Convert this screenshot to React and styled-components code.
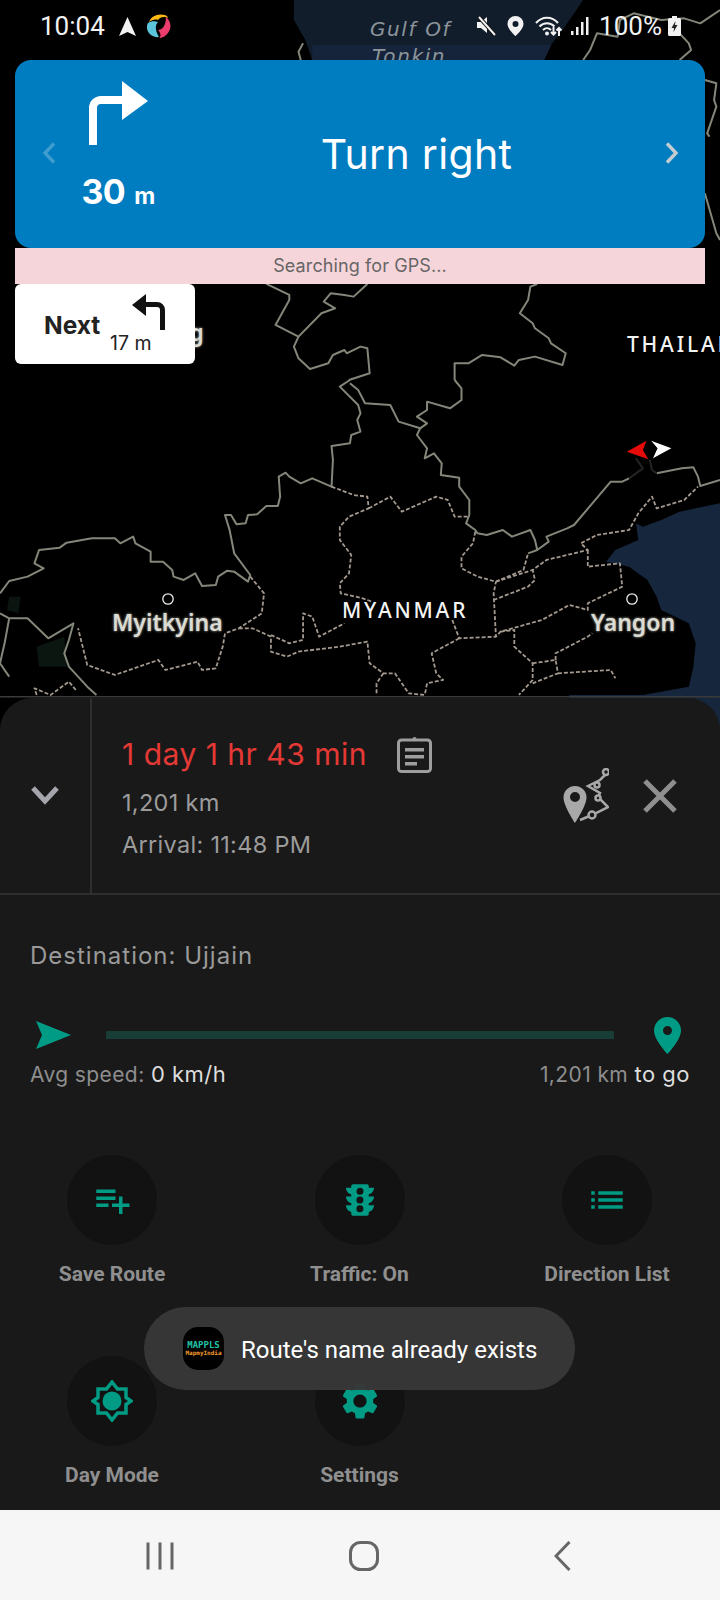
import React from 'react';
import styled, { createGlobalStyle } from 'styled-components';
import { MdPlaylistAdd, MdTraffic, MdList, MdSettings } from 'react-icons/md';

const GlobalStyle = createGlobalStyle`
  html, body { margin: 0; padding: 0; background: #000; }
  * { box-sizing: border-box; }
`;

const Screen = styled.div`
  position: relative;
  width: 720px;
  height: 1600px;
  overflow: hidden;
  display: flex;
  flex-direction: column;
  background: #000;
  font-family: Inter, "Liberation Sans", sans-serif;
`;

const MapArea = styled.div`
  position: relative;
  flex: 0 0 730px;
  overflow: hidden;
`;

const MapDrawing = styled.svg`
  position: absolute;
  inset: 0;
  width: 720px;
  height: 730px;
`;

const Border = styled.polyline`
  fill: none;
  stroke: #82877a;
  stroke-width: 2;
  stroke-linejoin: round;
  vector-effect: non-scaling-stroke;
`;

const DashedBorder = styled(Border)`
  stroke: #a3998f;
  stroke-width: 1.8;
  stroke-dasharray: 4 2;
`;

const RouteLine = styled(Border)`
  stroke: #232323;
`;

const MapLabel = styled.span`
  position: absolute;
  left: ${p => p.$x}px;
  top: ${p => p.$y}px;
  white-space: nowrap;
  font-family: "Noto Sans", "Open Sans", sans-serif;
`;

const SeaLabel = styled(MapLabel)`
  font-family: "DejaVu Sans", sans-serif;
  font-style: italic;
  font-size: 20px;
  letter-spacing: 1.6px;
  color: #8c959b;
`;

const CountryLabel = styled(MapLabel)`
  font-size: 21px;
  font-weight: 500;
  letter-spacing: 2.8px;
  color: #f4f4f4;
`;

const CityLabel = styled(MapLabel)`
  font-size: 23px;
  font-weight: 600;
  color: #dcdcd4;
  text-shadow: 0 0 3px #77776f, 0 0 2px #77776f;
`;

const StatusBar = styled.div`
  position: relative;
  height: 60px;
  padding: 14px 39px 0 40px;
  display: flex;
  align-items: flex-start;
  justify-content: space-between;
  font-family: Roboto, sans-serif;
  color: #f2f2f2;
`;

const StatusGroup = styled.div`
  display: flex;
  align-items: center;
  height: 24px;
  gap: ${p => p.$gap ?? 10}px;
`;

const StatusText = styled.span`
  font-size: 26px;
  line-height: 24px;
`;

const Banner = styled.div`
  position: relative;
  height: 188px;
  margin: 0 15px;
  padding: 0 26px 0 27px;
  display: flex;
  align-items: center;
  background: #007cc0;
  border-radius: 16px;
  color: #fff;
`;

const ManeuverColumn = styled.div`
  width: 124px;
  padding-bottom: 14px;
  display: flex;
  flex-direction: column;
  align-items: center;
  gap: 30px;
`;

const Distance = styled.div`
  font-weight: 700;
  font-size: 34px;
  line-height: 34px;
  white-space: nowrap;
  letter-spacing: -0.6px;

  small {
    font-size: 23px;
    margin-left: 9px;
  }
`;

const BannerTitle = styled.div`
  flex: 1;
  text-align: center;
  font-size: 41px;
  letter-spacing: 0.3px;
  line-height: 46px;
  padding-right: 12px;
`;

const PagerIcon = styled.svg`
  flex: none;
  width: 14px;
  height: 22px;
  margin-bottom: 2px;
  fill: none;
  stroke: ${p => p.$color};
  stroke-width: 3.4;
`;

const GpsBar = styled.div`
  position: relative;
  height: 36px;
  margin: 0 15px;
  background: #f6d5da;
  color: #666;
  font-size: 18px;
  letter-spacing: 0.1px;
  line-height: 36px;
  text-align: center;
`;

const NextCard = styled.div`
  position: relative;
  width: 180px;
  height: 80px;
  margin-left: 15px;
  padding: 10px 30px 0 29px;
  display: flex;
  justify-content: space-between;
  background: #fff;
  border-radius: 6px;
  color: #222;
`;

const NextLabel = styled.div`
  padding-top: 17px;
  font-size: 24.5px;
  line-height: 28px;
  font-weight: 700;
`;

const NextTurn = styled.div`
  width: 55px;
  font-size: 19.5px;
  line-height: 20px;
  white-space: nowrap;

  svg {
    display: block;
    margin: 0 0 3px 22px;
  }
`;

const Panel = styled.div`
  position: relative;
  flex: none;
  height: 812px;
  margin-top: -32px;
  background: #191919;
  border-radius: 32px 32px 0 0;
`;

const Summary = styled.div`
  height: 197px;
  display: flex;
  border-bottom: 2px solid #2e2e2e;
`;

const CollapseCell = styled.div`
  width: 92px;
  padding-bottom: 2px;
  display: flex;
  align-items: center;
  justify-content: center;
  border-right: 2px solid #2e2e2e;
`;

const Trip = styled.div`
  flex: 1;
  padding: 37px 0 0 30px;
`;

const TripTitle = styled.div`
  display: flex;
  align-items: center;
  gap: 30px;
  height: 38px;
  color: #e53935;
  font-size: 30px;
  letter-spacing: 0.5px;
`;

const TripLine = styled.div`
  margin-top: ${p => p.$top}px;
  color: #9c9c9c;
  font-size: 23.5px;
  letter-spacing: 0.3px;
  line-height: 28px;
`;

const TripActions = styled.div`
  display: flex;
  align-items: center;
  gap: 34px;
  padding: 0 43px 0 0;
`;

const Details = styled.div`
  padding: 44px 30px 0 30px;
`;

const Destination = styled.div`
  color: #9a9a9a;
  font-size: 24px;
  letter-spacing: 1px;
  line-height: 34px;
`;

const ProgressRow = styled.div`
  margin-top: 43px;
  height: 38px;
  display: flex;
  align-items: center;
  padding: 0 9px 0 6px;
`;

const ProgressBar = styled.div`
  flex: 1;
  height: 8px;
  margin: 0 40px 0 35px;
  background: #173d36;
`;

const Stats = styled.div`
  margin-top: 6px;
  display: flex;
  justify-content: space-between;
  color: #8e8e8e;
  font-size: 21px;
  letter-spacing: 0.4px;
  line-height: 28px;

  b {
    font-weight: 400;
    font-size: 22px;
    letter-spacing: 0.5px;
    color: #dedede;
  }
`;

const ActionGrid = styled.div`
  margin: 66px 0 0 17px;
  display: grid;
  grid-template-columns: repeat(3, 190px);
  column-gap: 57.5px;
  row-gap: 67px;
`;

const Action = styled.div`
  display: flex;
  flex-direction: column;
  align-items: center;
`;

const ActionCircle = styled.div`
  width: 90px;
  height: 90px;
  border-radius: 50%;
  background: #121212;
  color: #009b84;
  display: flex;
  align-items: center;
  justify-content: center;
`;

const ActionLabel = styled.div`
  margin-top: 14px;
  color: #8f8f8f;
  font-family: Roboto, sans-serif;
  font-weight: 700;
  font-size: 21px;
  line-height: 30px;
`;

const Toast = styled.div`
  position: absolute;
  left: 144px;
  top: 1307px;
  width: 431px;
  height: 83px;
  padding-left: 39px;
  display: flex;
  align-items: center;
  gap: 17px;
  border-radius: 42px;
  background: rgba(56, 56, 56, 0.97);
  color: #fff;
  font-family: Roboto, sans-serif;
  font-size: 24px;
`;

const ToastText = styled.span`
  padding-top: 3px;
`;

const ToastIcon = styled.div`
  width: 41px;
  height: 43px;
  border-radius: 15px;
  background: #000;
  display: flex;
  flex-direction: column;
  align-items: center;
  justify-content: center;
  font-family: "DejaVu Sans Mono", monospace;
  line-height: 8px;
`;

const ToastBrand = styled.span`
  color: ${p => p.$color};
  font-size: ${p => p.$size}px;
  font-weight: 700;
`;

const NavBar = styled.div`
  flex: 1;
  background: #f6f6f6;
  display: flex;
  align-items: flex-start;
  padding: 31px 149px 0 146px;
  justify-content: space-between;
`;

const NavIcon = styled.svg`
  fill: none;
  stroke: #666;
  stroke-width: 3;
`;

const SOLID = [
  '762,0 740,20 780,75 785,100 778,120 785,155 765,165 762,190 722,198 725,240 722,320 680,295 655,310 630,290 622,278 607,290 610,350 605,378 580,378 560,403 540,405 535,430 515,433 503,405 490,405 500,450 510,520 545,585 540,605 510,575 495,572 475,590 470,615 440,618 425,580 400,600 378,590 375,570 355,545 328,545 328,515 295,490 290,470 262,490 250,475 200,475 145,488 130,503 85,510 75,550 95,565 60,590 20,603 0,640',
  '990,0 1005,25 1005,60 980,85 930,65 930,90 908,110 930,130 915,145 868,125 850,75 795,70 780,30 762,10',
  '915,145 908,165 930,205 925,235 945,220 962,250 960,285 1000,293 1000,320 1022,360 1022,405 1015,430 1035,450 1040,460 1060,465 1095,450 1115,470 1155,450 1165,480 1170,510 1195,485 1190,470 1235,445 1250,435 1330,305 1355,305 1370,295',
  '1170,510 1150,520',
  '1430,280 1485,265 1510,262 1520,290 1525,318 1568,300',
  '0,700 20,715 60,715 105,775 160,730 150,780 140,820 150,860 190,920 210,945',
  '20,715 10,790 0,850 20,890',
];

const DASHED = [
  '722,320 770,345 800,350 803,385 760,410 740,440 740,480 765,525 760,580 740,610 742,640 790,655 810,665',
  '803,385 850,350 875,395 950,350 975,360 990,410 1022,410',
  '1035,455 1030,490 1005,530 1005,565 1040,590 1080,605 1140,570 1150,520',
  '1080,605 1160,570 1190,540 1280,510 1265,490 1300,465 1370,450 1390,400 1420,350 1430,385 1490,360 1520,320',
  '1280,510 1280,560 1350,550 1355,620 1280,670 1280,690 1240,675 1180,720 1090,755 1080,770 1075,640 1080,605',
  '1075,660 1150,620 1165,600 1160,570',
  '1090,755 1120,750 1120,800 1160,850 1160,900 1130,945',
  '985,720 1000,775 1080,770',
  '1000,775 940,820 950,880 965,900 930,910 925,945',
  '520,745 550,745 590,770 590,815 625,830 650,815 740,800 800,785 805,850 835,880 860,880 890,940 925,945',
  '590,765 630,790 660,780 660,700 680,710 695,770 750,730',
  '545,590 575,640 570,700 520,745 490,760 485,800 470,865 440,870 430,845 360,870 345,840 250,885 190,855 170,745',
  '1160,850 1210,840 1215,880 1160,910',
  '1210,840 1210,820 1280,770 1290,760',
  '1215,880 1330,870 1340,895',
  '80,945 75,925 110,945 150,905 165,930',
  '835,880 820,910 820,945',
];

const TOP_SOLID = [
  '1568,30 1525,70 1490,55 1440,60 1380,40 1350,60 1345,110 1300,100 1285,150 1270,180',
  '1460,70 1500,130 1505,150 1480,180',
  '655,180 650,155 660,130',
  '1535,240 1560,250 1555,300 1560,320 1540,400 1545,410',
  '1535,580 1560,700 1568,720',
  '580,852 630,885 630,900 600,975 650,1010 640,1040 650,1075 675,1107 715,1090 725,1065 750,1050 755,1060 785,1040 800,1045 805,1120 760,1140',
  '650,1010 700,940 730,925 705,905 720,880 750,885 770,890 800,852',
  '1170,852 1155,860 1150,900 1132,940 1160,970 1165,985 1195,1015 1200,1030 1232,1060 1225,1095 1165,1070 1130,1080 1120,1097 1090,1072 1050,1065 1020,1090 990,1090 990,1140',
];

const MapBackground = () => (
  <MapDrawing viewBox="0 0 720 730">
    <g transform="scale(0.4592 0.3333)">
      <polygon points="640,0 1270,0 1230,80 1200,135 1185,180 680,180 665,120 640,60" fill="#121d2c" />
      <polygon points="680,135 1200,135 1185,180 680,180" fill="#15243a" />
      {TOP_SOLID.map(p => <Border key={p} points={p} />)}
    </g>
    <g transform="translate(0 380) scale(0.4592 0.3333)">
      <polygon
        points="1568,370 1480,395 1440,420 1400,440 1385,430 1390,480 1340,510 1320,545 1370,560 1410,600 1430,650 1440,690 1500,730 1515,790 1510,860 1500,920 1400,945 1240,945 1240,1050 1568,1050"
        fill="#16263d"
      />
      <polygon points="20,650 45,650 40,700 15,690" fill="#0b140f" />
      <polygon points="80,800 140,770 145,860 85,860" fill="#0c1611" />
      {SOLID.map(p => <Border key={p} points={p} />)}
      {DASHED.map(p => <DashedBorder key={p} points={p} />)}
      <RouteLine points="1370,295 1400,265 1385,235" />
      <RouteLine points="1415,240 1420,270 1430,280" />
      <polygon points="1365,215 1408,182 1400,210 1412,238" fill="#e50b0b" />
      <polygon points="1418,182 1462,205 1422,235 1432,205" fill="#fff" />
    </g>
    <circle cx="168" cy="599" r="5.2" fill="#000" stroke="#eee" strokeWidth="1.3" />
    <circle cx="632" cy="599" r="5.2" fill="#000" stroke="#eee" strokeWidth="1.3" />
    <rect x="0" y="696" width="720" height="1.5" fill="#3a3a3a" />
  </MapDrawing>
);

const App = () => (
  <Screen>
    <GlobalStyle />
    <MapArea>
      <MapBackground />
      <SeaLabel $x={370} $y={17}>Gulf Of</SeaLabel>
      <SeaLabel $x={372} $y={44}>Tonkin</SeaLabel>
      <CityLabel $x={103} $y={316}>Jinghong</CityLabel>
      <CountryLabel $x={627} $y={330}>THAILAND</CountryLabel>
      <CountryLabel $x={342} $y={596}>MYANMAR</CountryLabel>
      <CityLabel $x={112} $y={606}>Myitkyina</CityLabel>
      <CityLabel $x={591} $y={606}>Yangon</CityLabel>

      <StatusBar>
        <StatusGroup $gap={14}>
          <StatusText>10:04</StatusText>
          <svg width="17" height="19" viewBox="0 0 17 19"><path d="M8.5 0L17 19 8.5 15 0 19z" fill="#f2f2f2" /></svg>
          <svg width="26" height="26" viewBox="0 0 26 26" style={{ marginLeft: -4 }}>
            <path d="M3 9C5 3 12 0 19 2c2 1 3 2 3 3-4-2-8-1-10 2-3-1-6 0-9 2z" fill="#fdb813" />
            <path d="M20 4c5 4 6 11 2 16-2 3-6 5-9 5 3-2 1-6-1-8 4 0 8-4 8-13z" fill="#ec3d6e" />
            <path d="M2 10c3-2 7-2 10-1-3 3-3 8 1 15-6 1-12-4-12-9 0-2 0-4 1-5z" fill="#5cc5dc" />
          </svg>
        </StatusGroup>
        <StatusGroup $gap={0}>
          <svg width="21" height="20" viewBox="0 0 21 20">
            <path d="M1 6h4l6-5v16l-6-5H1z" fill="#f2f2f2" />
            <path d="M3 1l16 18" stroke="#111" strokeWidth="4" />
            <path d="M3 1l16 18" stroke="#f2f2f2" strokeWidth="2" />
          </svg>
          <svg width="17" height="20" viewBox="0 0 17 20" style={{ marginLeft: 10 }}>
            <path fillRule="evenodd" d="M8.5 0A8 8 0 0 1 16.5 8c0 5-8 12-8 12S.5 13 .5 8A8 8 0 0 1 8.5 0zm0 5a3 3 0 1 0 0 6 3 3 0 0 0 0-6z" fill="#f2f2f2" />
          </svg>
          <svg width="30" height="21" viewBox="0 0 30 21" style={{ marginLeft: 11 }}>
            <g fill="none" stroke="#f2f2f2" strokeWidth="2">
              <path d="M1 7c6-7 16-7 22 0" />
              <path d="M4.500 10.500c4-4.500 11-4.500 15 0" />
              <path d="M8 14c2.500-2.500 5.500-2.500 8 0" />
              <path d="M24 20v-8M21.500 14.500L24 12l2.500 2.500" />
              <path d="M18.500 11v7M16 16l2.500 2.500L21 16" />
            </g>
            <circle cx="12" cy="17.500" r="2" fill="#f2f2f2" />
          </svg>
          <svg width="18" height="18" viewBox="0 0 18 18" style={{ marginLeft: 6 }}>
            <path d="M0 14h2.500v4H0zM5 10h2.500v8H5zM10 5h2.500v13H10zM15 0h2.500v18H15z" fill="#f2f2f2" />
          </svg>
          <StatusText style={{ marginLeft: 10 }}>100%</StatusText>
          <svg width="13" height="20" viewBox="0 0 13 20" style={{ marginLeft: 6 }}>
            <path d="M4 0h5v2h2.500A1.500 1.500 0 0 1 13 3.500V18.500A1.500 1.500 0 0 1 11.500 20H1.500A1.500 1.500 0 0 1 0 18.500V3.500A1.500 1.500 0 0 1 1.500 2H4z" fill="#f2f2f2" />
            <path d="M7.500 5L3.500 12H6l-.5 4 4-7H7z" fill="#222" />
          </svg>
        </StatusGroup>
      </StatusBar>

      <Banner>
        <PagerIcon $color="rgba(255,255,255,0.25)" viewBox="0 0 14 22"><path d="M12 1.500L3 11l9 9.500" /></PagerIcon>
        <ManeuverColumn>
          <svg width="59" height="64" viewBox="0 0 59 64">
            <path d="M0 64V27a12 12 0 0 1 12-12h21V0l26 20-26 19V23H12a4 4 0 0 0-4 4v37z" fill="#fff" />
          </svg>
          <Distance>30<small>m</small></Distance>
        </ManeuverColumn>
        <BannerTitle>Turn right</BannerTitle>
        <PagerIcon $color="#c3ccd1" viewBox="0 0 14 22"><path d="M2 1.500L11 11l-9 9.500" /></PagerIcon>
      </Banner>

      <GpsBar>Searching for GPS...</GpsBar>

      <NextCard>
        <NextLabel>Next</NextLabel>
        <NextTurn>
          <svg width="33" height="36" viewBox="0 0 33 36">
            <path d="M14 0v8h11a8 8 0 0 1 8 8v20h-5V16a3 3 0 0 0-3-3H14v9L0 11z" fill="#111" />
          </svg>
          17 m
        </NextTurn>
      </NextCard>
    </MapArea>

    <Panel>
      <Summary>
        <CollapseCell>
          <svg width="30" height="20" viewBox="0 0 30 20">
            <path d="M3 3l12 13L27 3" fill="none" stroke="#a5a5ad" strokeWidth="5" />
          </svg>
        </CollapseCell>
        <Trip>
          <TripTitle>
            1 day 1 hr 43 min
            <svg width="35" height="38" viewBox="0 0 35 38">
              <rect x="1.500" y="5" width="32" height="31.500" rx="3" fill="none" stroke="#9e9e9e" strokeWidth="3" />
              <path d="M12 6V4h3.500a2 2 0 0 1 4 0H23v2z" fill="#9e9e9e" />
              <path d="M8 13h19v3.500H8zM8 20h19v3.500H8zM8 27h12v3.500H8z" fill="#9e9e9e" />
            </svg>
          </TripTitle>
          <TripLine $top={16}>1,201 km</TripLine>
          <TripLine $top={14}>Arrival: 11:48 PM</TripLine>
        </Trip>
        <TripActions>
          <svg width="46" height="55" viewBox="0 0 46 55">
            <path fillRule="evenodd" d="M12 18a11.500 11.500 0 0 1 11.500 11.500C23.500 38 12 55 12 55S.5 38 .5 29.500A11.500 11.500 0 0 1 12 18zm0 6a5 5 0 1 0 0 10 5 5 0 0 0 0-10z" fill="#a8a8a8" />
            <g fill="none" stroke="#a8a8a8" strokeWidth="2.500">
              <path d="M17 52l12-5 16-8-10-10 2-4-12-7 12-6 6-6" />
              <circle cx="29" cy="47" r="3.500" fill="#191919" />
              <circle cx="35" cy="30" r="2.500" fill="#191919" />
              <circle cx="34" cy="17" r="2.500" fill="#191919" />
              <circle cx="43" cy="4" r="3" fill="#191919" />
            </g>
          </svg>
          <svg width="34" height="34" viewBox="0 0 34 34">
            <path d="M2 2l30 30M32 2L2 32" stroke="#8f8f8f" strokeWidth="5" />
          </svg>
        </TripActions>
      </Summary>

      <Details>
        <Destination>Destination: Ujjain</Destination>
        <ProgressRow>
          <svg width="35" height="28" viewBox="0 0 35 28">
            <path d="M0 0l35 14L0 28l6-14z" fill="#009b84" />
          </svg>
          <ProgressBar />
          <svg width="27" height="37" viewBox="0 0 27 37">
            <path fillRule="evenodd" d="M13.500 0A13.500 13.500 0 0 1 27 13.500C27 23 13.500 37 13.500 37S0 23 0 13.500A13.500 13.500 0 0 1 13.500 0zm0 9a4.500 4.500 0 1 0 0 9 4.500 4.500 0 0 0 0-9z" fill="#009b84" />
          </svg>
        </ProgressRow>
        <Stats>
          <span>Avg speed: <b>0 km/h</b></span>
          <span>1,201 km <b>to go</b></span>
        </Stats>
      </Details>

      <ActionGrid>
        <Action>
          <ActionCircle><MdPlaylistAdd size={42} /></ActionCircle>
          <ActionLabel>Save Route</ActionLabel>
        </Action>
        <Action>
          <ActionCircle><MdTraffic size={42} /></ActionCircle>
          <ActionLabel>Traffic: On</ActionLabel>
        </Action>
        <Action>
          <ActionCircle><MdList size={42} /></ActionCircle>
          <ActionLabel>Direction List</ActionLabel>
        </Action>
        <Action>
          <ActionCircle>
            <svg width="42" height="42" viewBox="0 0 42 42">
              <path d="M21 2l5.500 7H35v8.500l5 3.500-5 3.500V33h-8.500L21 40l-5.500-7H7v-8.500L2 21l5-3.500V9h8.500z" fill="none" stroke="#009b84" strokeWidth="3.500" />
              <circle cx="21" cy="21" r="9.500" fill="#009b84" />
            </svg>
          </ActionCircle>
          <ActionLabel>Day Mode</ActionLabel>
        </Action>
        <Action>
          <ActionCircle><MdSettings size={44} /></ActionCircle>
          <ActionLabel>Settings</ActionLabel>
        </Action>
      </ActionGrid>
    </Panel>

    <NavBar>
      <NavIcon width="28" height="30" viewBox="0 0 28 30">
        <path d="M2 1.500v27M14 1.500v27M26 1.500v27" />
      </NavIcon>
      <NavIcon width="30" height="30" viewBox="0 0 30 30">
        <rect x="1.500" y="1.500" width="27" height="27" rx="10" />
      </NavIcon>
      <NavIcon width="17" height="30" viewBox="0 0 17 30">
        <path d="M15.500 1L2 15l13.500 14" />
      </NavIcon>
    </NavBar>

    <Toast>
      <ToastIcon>
        <ToastBrand $color="#22c3a6" $size={9}>MAPPLS</ToastBrand>
        <ToastBrand $color="#f39a2d" $size={6}>MapmyIndia</ToastBrand>
      </ToastIcon>
      <ToastText>Route's name already exists</ToastText>
    </Toast>
  </Screen>
);

export default App;
